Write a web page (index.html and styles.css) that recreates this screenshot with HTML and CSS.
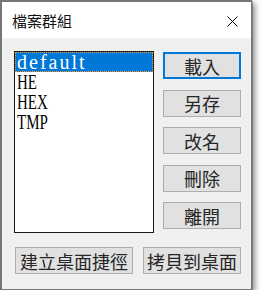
FILE: index.html
```html
<!DOCTYPE html>
<html lang="zh-Hant">
<head>
    <meta charset="UTF-8" />
    <title>檔案群組</title>
    <link rel="stylesheet" href="styles.css">
</head>
<body>

    <div class="window">
        <div class="title-bar">
            <span class="title">檔案群組</span>
            <svg class="close" width="11" height="11" viewBox="0 0 11 11">
                <path d="M0.5 0.5 L10.5 10.5 M10.5 0.5 L0.5 10.5" stroke="#000" stroke-width="1" fill="none" />
            </svg>
        </div>

        <div class="dialog-body">
            <div class="main-row">
                <div class="list-box">
                    <div class="list-item selected"><span class="lower">default</span></div>
                    <div class="list-item"><span class="caps">HE</span></div>
                    <div class="list-item"><span class="caps">HEX</span></div>
                    <div class="list-item"><span class="caps">TMP</span></div>
                </div>
                <div class="side-buttons">
                    <button class="btn btn-default">載入</button>
                    <button class="btn">另存</button>
                    <button class="btn">改名</button>
                    <button class="btn">刪除</button>
                    <button class="btn">離開</button>
                </div>
            </div>
            <div class="bottom-row">
                <button class="btn btn-shortcut">建立桌面捷徑</button>
                <button class="btn btn-copy">拷貝到桌面</button>
            </div>
        </div>
    </div>

</body>
</html>
```

FILE: styles.css
```css
body {
    margin: 0;
    padding: 0;
    background-color: #ffffff;
    font-family: 'Noto Sans CJK TC', 'Noto Sans', sans-serif;
}

.window {
    width: 252px;
    height: 290px;
    box-sizing: border-box;
    border-style: solid;
    border-color: #767676;
    border-width: 2px 1px 1px 2px;
    display: flex;
    flex-direction: column;
    box-shadow: 1px 1px 0 rgba(0, 0, 0, 0.25), 3px 3px 6px rgba(0, 0, 0, 0.45);
}

.title-bar {
    height: 36px;
    background-color: #ffffff;
    display: flex;
    align-items: center;
    justify-content: space-between;
    padding: 0 13px 0 10px;
}

.title {
    font-size: 15px;
    line-height: 1;
    color: #111;
}

.close {
    display: block;
    margin-top: 2px;
}

.dialog-body {
    flex: 1;
    background-color: #f0f0f0;
    padding: 13px 10px 15px 12px;
    display: flex;
    flex-direction: column;
    gap: 14px;
}

.main-row {
    display: flex;
    gap: 9px;
}

.list-box {
    width: 140px;
    height: 182px;
    box-sizing: border-box;
    border: 1px solid #1a1a1a;
    background-color: #ffffff;
}

.list-item {
    height: 20px;
    padding-left: 2px;
    font-family: 'Liberation Serif', serif;
    font-size: 20px;
    line-height: 20px;
    color: #000;
}

.list-item span {
    display: inline-block;
    transform-origin: left center;
}

/* lowercase glyphs sit in wide cells, capitals are squeezed */
.list-item .lower {
    letter-spacing: 2px;
}

.list-item .caps {
    transform: scaleX(0.75);
}

.list-item.selected {
    background-color: #0078d7;
    color: #ffffff;
    outline: 1px dotted #ff9a1f;
    outline-offset: -1px;
}

.side-buttons {
    display: flex;
    flex-direction: column;
    gap: 10.5px;
    padding-top: 1px;
}

.btn {
    width: 78px;
    height: 27px;
    box-sizing: border-box;
    background-color: #e1e1e1;
    border: 1px solid #adadad;
    border-radius: 0;
    padding: 0;
    margin: 0;
    font-family: 'Noto Sans CJK TC', 'Noto Sans', sans-serif;
    font-size: 18px;
    line-height: 1;
    color: #262626;
    display: flex;
    align-items: center;
    justify-content: center;
}

.btn-default {
    border: 2px solid #0078d7;
}

.bottom-row {
    display: flex;
    gap: 10px;
    padding-left: 1px;
}

.btn-shortcut {
    width: 118px;
}

.btn-copy {
    width: 98px;
}
```
